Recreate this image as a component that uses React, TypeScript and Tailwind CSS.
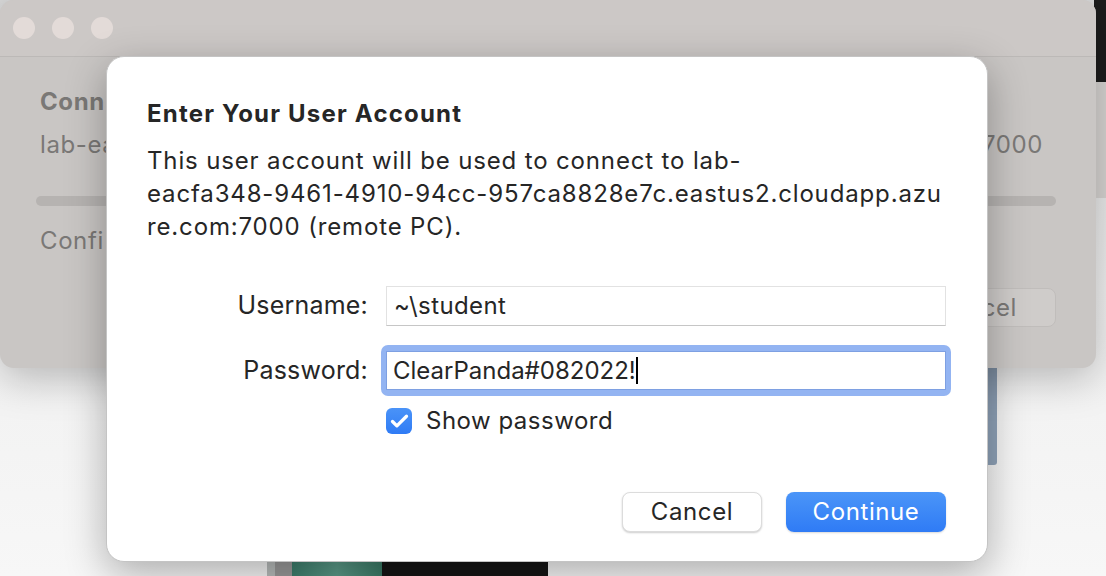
import { Check } from "lucide-react"

const font = { fontFamily: "Inter, 'Noto Sans', sans-serif" }

// only the part left of the sheet (x < 106) is visible
function Clipped({ children, bold }: { children: string; bold?: boolean }) {
  return (
    <div className={`w-[66px] overflow-hidden whitespace-nowrap leading-[28px] ${bold ? "font-bold" : ""}`}>
      {children}
    </div>
  )
}

function BackWindow() {
  return (
    <div className="absolute left-0 top-0 w-[1096px] h-[368px] rounded-[14px] bg-[#c9c6c4] shadow-[0_10px_40px_rgba(0,0,0,0.25)] overflow-hidden">
      {/* title bar */}
      <div className="h-[57px] bg-[#ccc8c6] border-b border-[#bcb9b7] flex items-center gap-[17px] pl-[13px]">
        <div className="w-[22px] h-[22px] rounded-full bg-[#e3dbd8]" />
        <div className="w-[22px] h-[22px] rounded-full bg-[#e3dbd8]" />
        <div className="w-[22px] h-[22px] rounded-full bg-[#e3dbd8]" />
      </div>
      <div className="pl-[40px] pr-[40px] pt-[31px] text-[#7a7876] text-[24px] tracking-[0.6px]">
        <Clipped bold>Conn</Clipped>
        <div className="mt-[15px] flex justify-between">
          <Clipped>lab-ea</Clipped>
          <span className="mr-[13px] leading-[28px]">7000</span>
        </div>
        <div className="mt-[37px] -ml-[4px] h-[10px] rounded-full bg-[#b6b3b1]" />
        <div className="mt-[21px]">
          <Clipped>Confi</Clipped>
        </div>
        <div className="mt-[33px] flex justify-end">
          <div className="w-[160px] h-[39px] rounded-[8px] bg-[#cfccca] border border-[#c0bdbb] flex items-center justify-end pr-[38px] text-[#7a7876]">
            cel
          </div>
        </div>
      </div>
    </div>
  )
}

function Desktop() {
  return (
    <>
      <div className="absolute right-0 top-0 w-[12px] h-[82px] bg-[#1c1c1c]" />
      <div className="absolute right-0 top-[82px] w-[12px] h-[116px] bg-[#d6d3d1]" />
      <div className="absolute left-[984px] top-[368px] w-[13px] h-[97px] bg-[#8fa2b8] rounded-b-[3px]" />
      <div className="absolute left-[267px] top-[562px] h-[14px] flex">
        <div className="w-[8px] bg-[#b9bdbc]" />
        <div className="w-[17px] bg-[#9a9a9a]" />
        <div className="w-[90px] bg-gradient-to-r from-[#3c7e6c] via-[#5b9a88] to-[#3a7a66]" />
        <div className="w-[166px] bg-[#151515]" />
      </div>
    </>
  )
}

function Dialog() {
  return (
    <div
      className="absolute left-[106px] top-[56px] w-[882px] h-[506px] rounded-[18px] bg-white border border-[#c4c4c4] shadow-[0_12px_40px_rgba(0,0,0,0.3)] pl-[40px] pr-[41px] pt-[43px] text-[#262626] text-[24px]"
      style={font}
    >
      <h1 className="font-bold leading-[28px] tracking-[1.2px]">Enter Your User Account</h1>
      <p className="mt-[16px] leading-[33px] whitespace-nowrap tracking-[0.85px]">
        This user account will be used to connect to lab-
        <br />
        eacfa348-9461-4910-94cc-957ca8828e7c.eastus2.cloudapp.azu
        <br />
        re.com:7000 (remote PC).
      </p>

      <div className="mt-[43px] flex items-center">
        <label className="w-[221px] text-right text-[25px] tracking-[0.2px]">Username:</label>
        <div className="ml-[18px] flex-1 h-[40px] border border-[#e2e2e2] border-b-[#c6c6c6] flex items-center px-[7px] tracking-[0.4px]">
          ~\student
        </div>
      </div>

      <div className="mt-[19px] flex items-center">
        <label className="w-[221px] text-right text-[25px] tracking-[0.2px]">Password:</label>
        <div className="ml-[13px] -mr-[5px] flex-1 px-[5px] py-[6px] rounded-[7px] bg-[#93b4f2]">
          <div className="h-[39px] bg-white border border-[#7ea0e2] flex items-center px-[6px]">
            ClearPanda#082022!
            <span className="inline-block w-[2px] h-[27px] bg-black" />
          </div>
        </div>
      </div>

      <div className="mt-[7px] ml-[239px] flex items-center gap-[14px] tracking-[0.5px]">
        <div className="w-[26px] h-[26px] rounded-[6px] bg-gradient-to-b from-[#4a93f8] to-[#2f7bf5] flex items-center justify-center">
          <Check className="w-[21px] h-[21px] text-white" strokeWidth={3.75} />
        </div>
        <span>Show password</span>
      </div>

      <div className="mt-[53px] flex justify-end gap-[24px] tracking-[0.6px]">
        <button className="w-[140px] h-[40px] rounded-[8px] bg-white border border-[#dcdcdc] shadow-[0_1px_2px_rgba(0,0,0,0.2)] text-[#262626]">
          Cancel
        </button>
        <button className="w-[160px] h-[40px] rounded-[8px] bg-gradient-to-b from-[#4b95f8] to-[#2f7bf5] text-white shadow-[0_1px_2px_rgba(0,0,0,0.15)]">
          Continue
        </button>
      </div>
    </div>
  )
}

export default function App() {
  return (
    <div className="relative w-[1106px] h-[576px] overflow-hidden bg-gradient-to-b from-[#d9d9d9] via-[#f0f0f0] to-[#f7f7f7]" style={font}>
      <Desktop />
      <BackWindow />
      <Dialog />
    </div>
  )
}
